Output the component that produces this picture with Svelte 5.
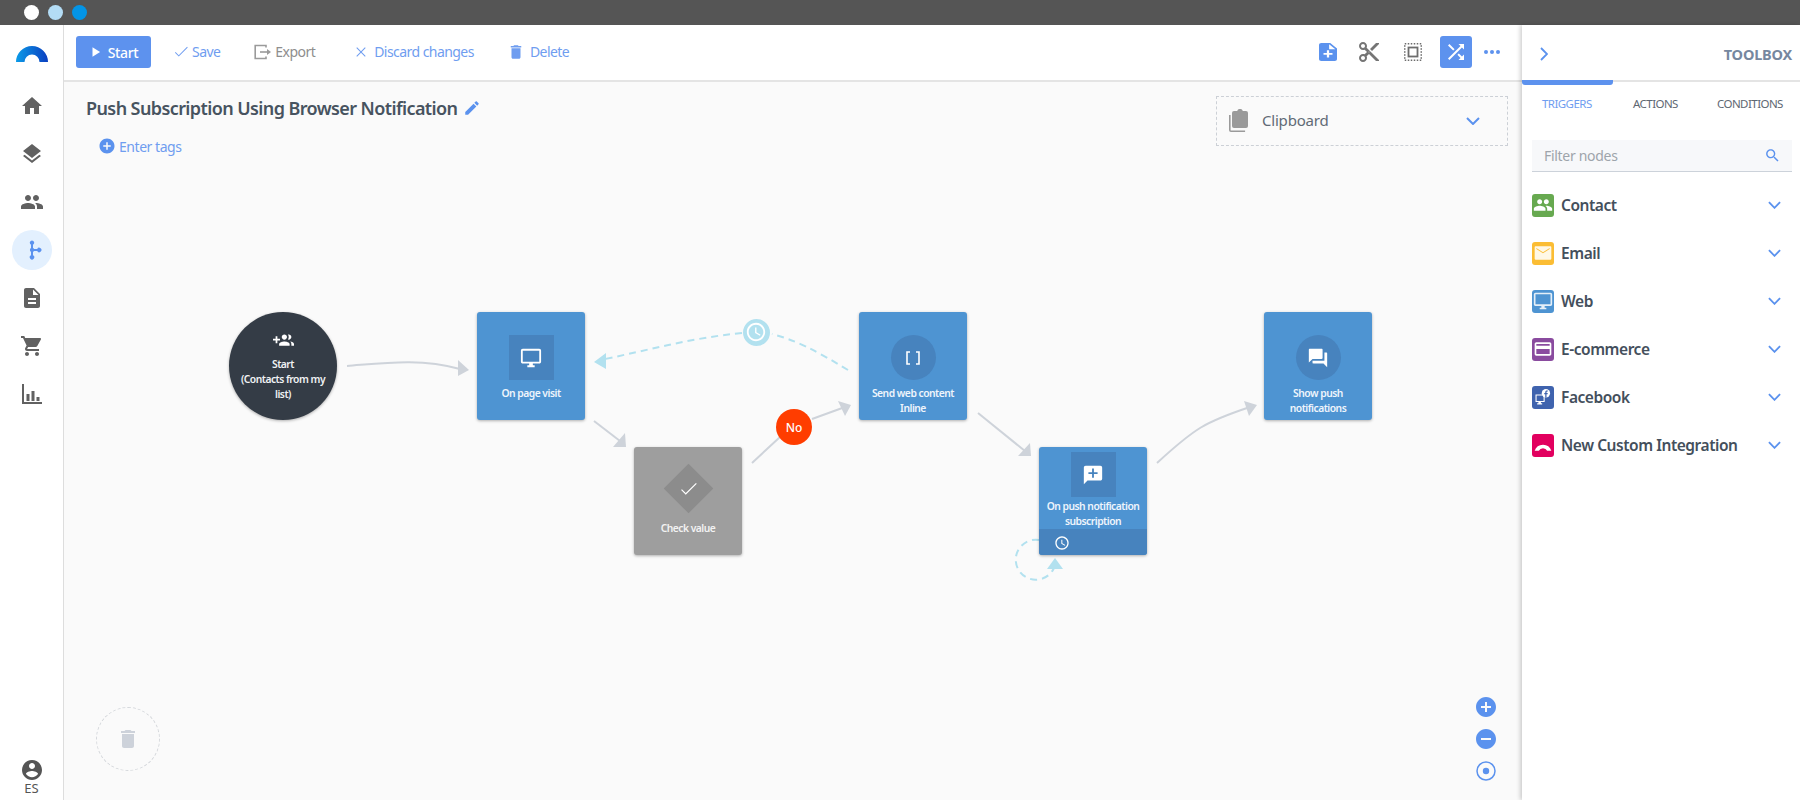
<script>
  const paths = {
    home: 'M10 20v-6h4v6h5v-8h3L12 3 2 12h3v8z',
    layers: 'M11.99 18.54l-7.37-5.73L3 14.07l9 7 9-7-1.63-1.27-7.38 5.74zM12 16l7.36-5.73L21 9l-9-7-9 7 1.63 1.27L12 16z',
    people: 'M16 11c1.66 0 2.99-1.34 2.99-3S17.66 5 16 5c-1.66 0-3 1.34-3 3s1.34 3 3 3zm-8 0c1.66 0 2.99-1.34 2.99-3S9.66 5 8 5C6.34 5 5 6.34 5 8s1.34 3 3 3zm0 2c-2.33 0-7 1.17-7 3.5V19h14v-2.5c0-2.33-4.67-3.5-7-3.5zm8 0c-.29 0-.62.02-.97.05 1.16.84 1.97 1.97 1.97 3.45V19h6v-2.5c0-2.33-4.67-3.5-7-3.5z',
    doc: 'M14 2H6c-1.1 0-1.99.9-1.99 2L4 20c0 1.1.89 2 1.99 2H18c1.1 0 2-.9 2-2V8l-6-6zm2 16H8v-2h8v2zm0-4H8v-2h8v2zm-3-5V3.5L18.5 9H13z',
    cart: 'M7 18c-1.1 0-1.99.9-1.99 2S5.9 22 7 22s2-.9 2-2-.9-2-2-2zM1 2v2h2l3.6 7.59-1.35 2.45c-.16.28-.25.61-.25.96 0 1.1.9 2 2 2h12v-2H7.42c-.14 0-.25-.11-.25-.25l.03-.12.9-1.63h7.45c.75 0 1.41-.41 1.75-1.03l3.58-6.49c.08-.14.12-.31.12-.48 0-.55-.45-1-1-1H5.21l-.94-2H1zm16 16c-1.1 0-1.99.9-1.99 2s.89 2 1.99 2 2-.9 2-2-.9-2-2-2z',
    chart: 'M2 2h2v18h18v2H2zM6.5 12h3v7h-3zM11.5 9h3v10h-3zM16.5 15h3v4h-3z',
    flow: 'M12 2.5a2.2 2.2 0 0 1 1 4.16V10.1a2.2 2.2 0 0 1 1 .9h3.2a2.2 2.2 0 1 1 0 2H14a2.2 2.2 0 0 1-1 .9v3.44a2.2 2.2 0 1 1-2 0V13.9a2.2 2.2 0 0 1 0-3.8V6.66A2.2 2.2 0 0 1 12 2.5z',
    user: 'M12 2C6.48 2 2 6.48 2 12s4.48 10 10 10 10-4.48 10-10S17.52 2 12 2zm0 3c1.66 0 3 1.34 3 3s-1.34 3-3 3-3-1.34-3-3 1.34-3 3-3zm0 14.2c-2.5 0-4.71-1.28-6-3.22.03-1.99 4-3.08 6-3.08 1.99 0 5.97 1.09 6 3.08-1.29 1.94-3.5 3.22-6 3.22z',
    play: 'M6 4v16l13-8z',
    check: 'M9 16.17L4.83 12l-.9.9L9 18 21 6l-.9-.9z',
    close: 'M19 6.1L17.9 5 12 10.9 6.1 5 5 6.1 10.9 12 5 17.9 6.1 19 12 13.1 17.9 19 19 17.9 13.1 12z',
    trash: 'M6 19c0 1.1.9 2 2 2h8c1.1 0 2-.9 2-2V7H6v12zM19 4h-3.500l-1-1h-5l-1 1H5v2h14V4z',
    pencil: 'M3 17.25V21h3.75L17.81 9.94l-3.75-3.75L3 17.25zM20.71 7.04c.39-.39.39-1.02 0-1.41l-2.34-2.34c-.39-.39-1.02-.39-1.41 0l-1.83 1.83 3.75 3.75 1.83-1.83z',
    plus: 'M12 2C6.48 2 2 6.48 2 12s4.48 10 10 10 10-4.48 10-10S17.52 2 12 2zm5 11h-4v4h-2v-4H7v-2h4V7h2v4h4v2z',
    minus: 'M12 2C6.48 2 2 6.48 2 12s4.48 10 10 10 10-4.48 10-10S17.52 2 12 2zm5 11H7v-2h10v2z',
    cut: 'M9.64 7.64c.23-.5.36-1.05.36-1.64 0-2.21-1.79-4-4-4S2 3.79 2 6s1.79 4 4 4c.59 0 1.14-.13 1.64-.36L10 12l-2.36 2.36C7.14 14.13 6.59 14 6 14c-2.21 0-4 1.79-4 4s1.79 4 4 4 4-1.79 4-4c0-.59-.13-1.14-.36-1.64L12 14l7 7h3v-1L9.64 7.64zM6 8c-1.1 0-2-.89-2-2s.9-2 2-2 2 .89 2 2-.9 2-2 2zm0 12c-1.1 0-2-.89-2-2s.9-2 2-2 2 .89 2 2-.9 2-2 2zm6-7.5c-.28 0-.5-.22-.5-.5s.22-.5.5-.5.5.22.5.5-.22.5-.5.5zM19 3l-6 6 2 2 7-7V3z',
    shuffle: 'M10.59 9.17L5.41 4 4 5.41l5.17 5.17 1.42-1.41zM14.5 4l2.04 2.04L4 18.59 5.41 20 17.96 7.46 20 9.5V4h-5.5zm.33 9.41l-1.41 1.41 3.13 3.13L14.5 20H20v-5.5l-2.04 2.04-3.13-3.13z',
    search: 'M15.5 14h-.79l-.28-.27C15.41 12.59 16 11.11 16 9.5 16 5.91 13.09 3 9.5 3S3 5.91 3 9.5 5.91 16 9.5 16c1.61 0 3.09-.59 4.23-1.57l.27.28v.79l5 4.99L20.49 19l-4.99-5zm-6 0C7.01 14 5 11.99 5 9.5S7.01 5 9.5 5 14 7.01 14 9.5 11.99 14 9.5 14z',
    desktop: 'M21 2H3c-1.1 0-2 .9-2 2v12c0 1.1.9 2 2 2h7v2H8v2h8v-2h-2v-2h7c1.1 0 2-.9 2-2V4c0-1.1-.9-2-2-2zm0 14H3V4h18v12z',
    groupadd: 'M8 10H5V7H3v3H0v2h3v3h2v-3h3v-2zm10 1c1.66 0 2.99-1.34 2.99-3S19.66 5 18 5c-.32 0-.63.05-.91.14.57.81.9 1.79.9 2.86s-.34 2.04-.9 2.86c.28.09.59.14.91.14zm-5 0c1.66 0 2.99-1.34 2.99-3S14.66 5 13 5s-3 1.34-3 3 1.34 3 3 3zm6.62 2.16c.83.73 1.38 1.66 1.38 2.84v2h3v-2c0-1.54-2.37-2.49-4.38-2.84zM13 13c-2 0-6 1-6 3v2h12v-2c0-2-4-3-6-3z',
    forum: 'M21 6h-2v9H6v2c0 .55.45 1 1 1h11l4 4V7c0-.55-.45-1-1-1zm-4 6V3c0-.55-.45-1-1-1H3c-.55 0-1 .45-1 1v14l4-4h10c.55 0 1-.45 1-1z',
    comment: 'M22 4c0-1.1-.9-2-2-2H4c-1.1 0-1.99.9-1.99 2L2 22l4-4h14c1.1 0 2-.9 2-2V4zm-5 7h-4v4h-2v-4H7V9h4V5h2v4h4v2z',
    clock: 'M11.99 2C6.47 2 2 6.48 2 12s4.47 10 9.99 10C17.52 22 22 17.52 22 12S17.52 2 11.99 2zM12 20c-4.42 0-8-3.58-8-8s3.58-8 8-8 8 3.58 8 8-3.58 8-8 8zm.5-13H11v6l5.25 3.15.75-1.23-4.5-2.67z',
    mail: 'M3 4h18a1 1 0 0 1 1 1v14a1 1 0 0 1-1 1H3a1 1 0 0 1-1-1V5a1 1 0 0 1 1-1zm9 8.2L20 7.2V6L12 11 4 6v1.2z',
    card: 'M20 4H4c-1.11 0-2 .89-2 2v12c0 1.11.89 2 2 2h16c1.11 0 2-.89 2-2V6c0-1.11-.89-2-2-2zm0 14H4v-6h16v6zm0-10H4V6h16v2z',
    fileplus: 'M14 2H6a2 2 0 0 0-2 2v16a2 2 0 0 0 2 2h12a2 2 0 0 0 2-2V8zm-1 1.5L18.5 9H13zM16 15h-3v3h-2v-3H8v-2h3v-3h2v3h3z',
    clip: 'M18 2h-3.2a2.9 2.9 0 0 0-5.6 0H6a2 2 0 0 0-2 2v13a2 2 0 0 0 2 2h12a2 2 0 0 0 2-2V4a2 2 0 0 0-2-2zM1 6h1.6v15a.5.5 0 0 0 .5.5h14V23H3a2 2 0 0 1-2-2z'
  };

  const side = [
    { icon: 'home', on: false }, { icon: 'layers', on: false }, { icon: 'people', on: false },
    { icon: 'flow', on: true }, { icon: 'doc', on: false }, { icon: 'cart', on: false }, { icon: 'chart', on: false }
  ];
  const nodes = [
    { x: 477, y: 312, kind: 'blue', shape: 'sq', icon: 'desktop', lines: ['On page visit'] },
    { x: 634, y: 447, kind: 'grey', shape: 'dia', icon: 'check', lines: ['Check value'] },
    { x: 859, y: 312, kind: 'blue', shape: 'round', icon: 'brackets', lines: ['Send web content', 'Inline'] },
    { x: 1264, y: 312, kind: 'blue', shape: 'round', icon: 'forum', lines: ['Show push', 'notifications'] }
  ];
  const cats = [
    { label: 'Contact', bg: '#67a950', icon: 'people' },
    { label: 'Email', bg: '#fbbd34', icon: 'mail' },
    { label: 'Web', bg: '#4e94d2', icon: 'desktop' },
    { label: 'E-commerce', bg: '#8a4b9f', icon: 'card' },
    { label: 'Facebook', bg: '#3f63ae', icon: 'fb' },
    { label: 'New Custom Integration', bg: '#e2005f', icon: 'arc' }
  ];
  const ox = 64, oy = 82;
</script>

<div class="top">
  <span class="dot white"></span><span class="dot pale"></span><span class="dot sky"></span>
</div>

<div class="body">
  <nav class="sidebar">
    <svg class="logo" viewBox="0 0 32 16" width="32" height="16">
      <defs>
        <linearGradient id="lg" x1="0" x2="1" y1="0" y2="0">
          <stop offset="0" stop-color="#0b9be8" /><stop offset="1" stop-color="#0b3fc0" />
        </linearGradient>
      </defs>
      <path d="M0 16A16 16 0 0 1 32 16H23.5A7.5 7.5 0 0 0 8.5 16Z" fill="url(#lg)" />
    </svg>
    <div class="sidelist">
      {#each side as s}
        <div class="sideitem" class:on={s.on}>
          <svg viewBox="0 0 24 24" width="24" height="24"><path d={paths[s.icon]} /></svg>
        </div>
      {/each}
    </div>
    <div class="lang">
      <svg viewBox="0 0 24 24" width="24" height="24"><path d={paths.user} /></svg>
      <span>ES</span>
    </div>
  </nav>

  <main class="main">
    <header class="toolbar">
      <button class="start">
        <svg viewBox="0 0 24 24" width="14" height="14"><path d={paths.play} /></svg>
        <span>Start</span>
      </button>
      <div class="btn blue save"><svg viewBox="0 0 24 24" width="18" height="18"><path d={paths.check} /></svg><span>Save</span></div>
      <div class="btn grey export">
        <svg viewBox="0 0 18 16" width="18" height="16" class="outline">
          <path d="M12 3.5V1.500H1.200V14.500H12V12.500" /><path d="M6 8H13" /><path class="solid" d="M13 5L17 8L13 11Z" />
        </svg>
        <span>Export</span>
      </div>
      <div class="btn blue discard"><svg viewBox="0 0 24 24" width="16" height="16"><path d={paths.close} /></svg><span>Discard changes</span></div>
      <div class="btn blue delete"><svg viewBox="0 0 24 24" width="18" height="18"><path d={paths.trash} /></svg><span>Delete</span></div>
      <div class="tools">
        <svg class="tfile" viewBox="4 2 16 20" width="18" height="18" preserveAspectRatio="none"><path d={paths.fileplus} /></svg>
        <svg class="tcut" viewBox="0 0 24 24" width="24" height="24"><path d={paths.cut} /></svg>
        <svg class="tsel" viewBox="0 0 18 18" width="18" height="18">
          <rect x=".75" y=".75" width="16.500" height="16.500" class="dash" />
          <rect x="4.500" y="4.500" width="9" height="9" class="inner" />
        </svg>
        <div class="tshuffle"><svg viewBox="0 0 24 24" width="24" height="24"><path d={paths.shuffle} /></svg></div>
        <div class="more"><i></i><i></i><i></i></div>
      </div>
    </header>

    <section class="canvas">
      <div class="titlerow">
        <h1>Push Subscription Using Browser Notification</h1>
        <svg viewBox="0 0 24 24" width="18" height="18"><path d={paths.pencil} /></svg>
      </div>
      <div class="tags">
        <svg viewBox="0 0 24 24" width="18" height="18"><path d={paths.plus} /></svg>
        <span>Enter tags</span>
      </div>

      <div class="clipboard">
        <svg viewBox="0 0 24 24" width="24" height="24"><path d={paths.clip} /></svg>
        <span>Clipboard</span>
        <svg class="chev" viewBox="0 0 14 8" width="14" height="8"><path d="M1 1L7 7L13 1" /></svg>
      </div>

      <svg class="edges" width="1457" height="718" viewBox="{ox} {oy} 1457 718">
        <g class="edge">
          <path d="M347 366C385 363 420 358 460 369" />
          <path d="M594 421L620 441" />
          <path d="M752 463L780 437M812 419L845 407" />
          <path d="M978 413L1025 451" />
          <path d="M1157 463C1195 428 1205 422 1250 407" />
        </g>
        <g class="tip">
          <path d="M469 370L458 360L458 376Z" />
          <path d="M626 447L613 447L625 433Z" />
          <path d="M851 405L838 401L845 416Z" />
          <path d="M1031 456L1018 456L1030 443Z" />
          <path d="M1257 405L1244 401L1249 416Z" />
        </g>
        <g class="dashline">
          <path d="M848 370C815 350 795 340 772 334" />
          <path d="M742 333C690 338 650 350 600 360" />
          <path d="M1039 540A20 20 0 1 0 1054 568" />
        </g>
        <g class="tipdash">
          <path d="M594 362L606 353L606 369Z" />
          <path d="M1055 558L1047 569L1063 569Z" />
        </g>
      </svg>

      <div class="startnode" style="left:{229 - ox}px;top:{312 - oy}px">
        <svg viewBox="0 0 24 24" width="21" height="21"><path d={paths.groupadd} /></svg>
        <p>Start</p>
        <p>(Contacts from my</p>
        <p>list)</p>
      </div>

      {#each nodes as n}
        <div class="node {n.kind}" style="left:{n.x - ox}px;top:{n.y - oy}px">
          <div class="ic {n.shape}">
            {#if n.icon === 'brackets'}
              <svg class="br" viewBox="0 0 16 16" width="16" height="16"><path d="M5 2H2V14H5M11 2H14V14H11" /></svg>
            {:else}
              <svg viewBox="0 0 24 24" width="22" height="22"><path d={paths[n.icon]} /></svg>
            {/if}
          </div>
          {#each n.lines as l}<p>{l}</p>{/each}
        </div>
      {/each}

      <div class="node blue push" style="left:{1039 - ox}px;top:{447 - oy}px">
        <div class="ic sq"><svg viewBox="0 0 24 24" width="22" height="22"><path d={paths.comment} /></svg></div>
        <p>On push notification</p>
        <p>subscription</p>
        <div class="foot"><svg viewBox="0 0 24 24" width="16" height="16"><path d={paths.clock} /></svg></div>
      </div>

      <div class="clockbadge" style="left:{742.5 - ox}px;top:{318.5 - oy}px">
        <svg viewBox="0 0 24 24" width="22" height="22"><path d={paths.clock} /></svg>
      </div>
      <div class="nobadge" style="left:{776 - ox}px;top:{409 - oy}px">No</div>

      <div class="bin"><svg viewBox="0 0 24 24" width="24" height="24"><path d={paths.trash} /></svg></div>

      <div class="zoomctl">
        <svg viewBox="2 2 20 20" width="20" height="20"><path d={paths.plus} /></svg>
        <svg viewBox="2 2 20 20" width="20" height="20"><path d={paths.minus} /></svg>
        <svg viewBox="0 0 20 20" width="20" height="20" class="center"><circle cx="10" cy="10" r="9" /><circle cx="10" cy="10" r="3.2" class="c" /></svg>
      </div>
    </section>
  </main>

  <aside class="panel">
    <div class="phead">
      <svg viewBox="0 0 8 14" width="8" height="14"><path d="M1 1L7 7L1 13" /></svg>
      <strong>TOOLBOX</strong>
    </div>
    <div class="tabs">
      <span class="tab active">TRIGGERS</span>
      <span class="tab">ACTIONS</span>
      <span class="tab">CONDITIONS</span>
    </div>
    <div class="filter">
      <span>Filter nodes</span>
      <svg viewBox="0 0 24 24" width="17" height="17"><path d={paths.search} /></svg>
    </div>
    <ul class="cats">
      {#each cats as c}
        <li>
          <span class="tile" style="background:{c.bg}">
            {#if c.icon === 'fb'}
              <svg viewBox="0 0 24 24" width="22" height="22">
                <path d="M3 9h11v9H9.500v1.500H11V21H5v-1.500h1.500V18H3zM4.300 10.300v6.400h8.400v-6.400z" fill="#fff" />
                <circle cx="15.500" cy="7.500" r="5" fill="#fff" />
                <path d="M16.200 12.500V8.600h1.300l.2-1.500h-1.500v-.9c0-.4.2-.7.7-.7h.9V4.100h-1.200c-1.200 0-1.900.8-1.900 1.900v1.100h-1.200v1.500h1.200v3.900z" fill="#3f63ae" />
              </svg>
            {:else if c.icon === 'arc'}
              <svg viewBox="0 0 24 24" width="22" height="22"><path d="M2 19A10.500 10.500 0 0 1 22 19H17A5.500 5.500 0 0 0 7 19Z" fill="#fff" /></svg>
            {:else}
              <svg viewBox="0 0 24 24" width="22" height="22"><path d={paths[c.icon]} fill={c.icon === 'mail' ? '#fff8e6' : '#fff'} opacity={c.icon === 'desktop' ? .85 : 1} /></svg>
            {/if}
          </span>
          <span class="catlabel">{c.label}</span>
          <svg class="chev" viewBox="0 0 14 8" width="13" height="8"><path d="M1 1L7 7L13 1" /></svg>
        </li>
      {/each}
    </ul>
  </aside>
</div>

<style>
  :global(body) { margin: 0; overflow: hidden; background: #fff; }
  .top, .body { font-family: "Noto Sans", "Open Sans", sans-serif; }

  .top { height: 25px; background: #555; display: flex; align-items: center; gap: 9px; padding-left: 24px; }
  .dot { width: 15px; height: 15px; border-radius: 50%; }
  .white { background: #fff; }
  .pale { background: #b3dcf5; }
  .sky { background: #0394e6; }

  .body { display: flex; height: 775px; }

  .sidebar { width: 63px; border-right: 1px solid #ddd; background: #fff; display: flex; flex-direction: column; align-items: center; flex: none; }
  .logo { margin-top: 21px; margin-left: 1px; }
  .sidelist { display: flex; flex-direction: column; margin-top: 24px; gap: 8px; align-items: center; }
  .sideitem { width: 40px; height: 40px; border-radius: 50%; display: flex; align-items: center; justify-content: center; fill: #616161; }
  .sideitem.on { background: #e3f0fe; fill: #5b92ef; }
  .lang { margin-top: auto; display: flex; flex-direction: column; align-items: center; fill: #555; color: #555; font-size: 13px; line-height: 15px; padding-bottom: 4px; }
  .lang svg { margin-bottom: -1px; }

  .main { flex: 1; min-width: 0; display: flex; flex-direction: column; }
  .toolbar { height: 57px; flex: none; box-sizing: border-box; border-bottom: 2px solid #e4e4e4; display: flex; align-items: center; padding: 0 22px 1px 12px; background: #fff; }
  .start { width: 75px; height: 32px; border: 0; border-radius: 3px; background: #5d92ee; color: #fff; display: flex; align-items: center; justify-content: center; gap: 5px; font: 500 14px "Noto Sans", sans-serif; letter-spacing: -.4px; padding: 0; fill: #fff; }
  .btn { display: flex; align-items: center; font-size: 14px; letter-spacing: -.55px; margin-top: -1px; }
  .btn.blue { color: #6f9df0; fill: #6f9df0; }
  .btn.grey { color: #8e8e8e; fill: #8e8e8e; }
  .save { margin-left: 21px; gap: 2px; }
  .export { margin-left: 34px; gap: 3px; }
  .discard { margin-left: 38px; gap: 5px; }
  .delete { margin-left: 33px; gap: 5px; }
  .outline path { fill: none; stroke: #9a9a9a; stroke-width: 1.6; }
  .outline path.solid { fill: #9a9a9a; stroke: none; }

  .tools { margin-left: auto; display: flex; align-items: center; }
  .tfile { fill: #5b92ee; }
  .tcut { fill: #757575; margin-left: 20px; }
  .tsel { margin-left: 23px; }
  .dash { fill: none; stroke: #6d6d6d; stroke-width: 1.5; stroke-dasharray: 1.5 1.5; }
  .inner { fill: none; stroke: #6d6d6d; stroke-width: 1.8; }
  .tshuffle { width: 32px; height: 32px; background: #5d92ee; border-radius: 3px; margin-left: 18px; display: flex; align-items: center; justify-content: center; fill: #fff; }
  .more { display: flex; gap: 2px; margin-left: 12px; }
  .more i { width: 4px; height: 4px; border-radius: 50%; background: #5d92ee; }

  .canvas { flex: 1; position: relative; background: #fafafa; padding: 14px 22px; }
  .titlerow { display: flex; align-items: center; gap: 6px; fill: #5b92ee; height: 24px; }
  h1 { margin: 0; font-size: 18px; font-weight: 600; color: #47535f; letter-spacing: -.6px; white-space: nowrap; }
  .tags { display: flex; align-items: center; gap: 3px; margin: 16px 0 0 12px; color: #6f9df0; fill: #5b92ee; font-size: 14px; letter-spacing: -.45px; height: 20px; }

  .clipboard { position: absolute; left: 1152px; top: 14px; width: 292px; height: 50px; box-sizing: border-box; border: 1px dashed #ccd0d6; display: flex; align-items: center; padding: 0 27px 0 11px; color: #616a75; fill: #9a9a9a; font-size: 15px; }
  .clipboard span { margin-left: 10px; flex: 1; letter-spacing: -.2px; padding-bottom: 3px; }
  .chev { fill: none; stroke: #5b92ee; stroke-width: 2; flex: none; }

  .edges { position: absolute; left: 0; top: 0; pointer-events: none; }
  .edge path { fill: none; stroke: #ced3da; stroke-width: 2; }
  .tip path { fill: #ced3da; }
  .dashline path { fill: none; stroke: #b2e1ef; stroke-width: 2; stroke-dasharray: 7 5; }
  .tipdash path { fill: #b2e1ef; }

  .startnode { position: absolute; width: 108px; height: 108px; border-radius: 50%; background: #343c46; color: #f0f2f4; box-shadow: 0 1px 3px rgba(0,0,0,.3); display: flex; flex-direction: column; align-items: center; box-sizing: border-box; padding-top: 18px; fill: #fff; }
  .startnode svg { margin-bottom: 6px; }
  .startnode p, .node p { margin: 0; font-size: 10.3px; line-height: 15px; font-weight: 600; letter-spacing: -.5px; text-align: center; white-space: nowrap; }

  .node { position: absolute; width: 108px; height: 108px; border-radius: 3px; box-shadow: 0 1px 3px rgba(0,0,0,.3); display: flex; flex-direction: column; align-items: center; box-sizing: border-box; padding-top: 23px; color: #eef5fc; fill: #fff; overflow: hidden; }
  .node.blue { background: #4e94d2; }
  .node.grey { background: #9e9e9e; color: #f2f2f2; }
  .ic { width: 45px; height: 45px; display: flex; align-items: center; justify-content: center; margin-bottom: 6px; flex: none; background: #4783be; }
  .ic.round { border-radius: 50%; }
  .ic.dia { background: #8c8c8c; width: 35px; height: 35px; transform: rotate(45deg); margin: 1px 5px 15px; }
  .ic.dia svg { transform: rotate(-45deg); }
  .br { fill: none; stroke: #fff; stroke-width: 1.6; }
  .node.push { padding-top: 5px; }
  .node.push .ic { margin-bottom: 2px; }
  .foot { flex: none; align-self: stretch; height: 27px; background: #4783be; display: flex; align-items: center; padding-left: 15px; box-sizing: border-box; }

  .clockbadge { position: absolute; width: 27px; height: 27px; border-radius: 50%; background: #b2e1ef; display: flex; align-items: center; justify-content: center; fill: #fff; }
  .nobadge { position: absolute; width: 36px; height: 36px; border-radius: 50%; background: #ff3d00; color: #fff; display: flex; align-items: center; justify-content: center; font-size: 12px; font-weight: 500; }

  .bin { position: absolute; left: 32px; top: 625px; width: 64px; height: 64px; box-sizing: border-box; border: 1px dashed #d4d7db; border-radius: 50%; display: flex; align-items: center; justify-content: center; fill: #cdd2da; }

  .zoomctl { position: absolute; left: 1412px; top: 615px; display: flex; flex-direction: column; gap: 12px; fill: #5b92ee; }
  .center circle { fill: none; stroke: #5b92ee; stroke-width: 1.5; }
  .center circle.c { fill: #5b92ee; stroke: none; }

  .panel { width: 278px; flex: none; background: #fff; box-shadow: -2px 0 4px rgba(0,0,0,.18); position: relative; z-index: 1; }
  .phead { height: 57px; box-sizing: border-box; border-bottom: 2px solid #e4e4e4; display: flex; align-items: center; justify-content: space-between; padding: 2px 8px 0 18px; }
  .phead svg { fill: none; stroke: #5b92ee; stroke-width: 1.8; }
  .phead strong { font-size: 14.5px; color: #76879f; letter-spacing: -.2px; font-weight: 700; }
  .tabs { display: flex; height: 56px; box-sizing: border-box; font-size: 11.5px; letter-spacing: -.55px; color: #5e6772; position: relative; }
  .tab { position: absolute; top: 14px; line-height: 16px; }
  .tab:nth-child(1) { left: 20px; color: #6f9df0; }
  .tab:nth-child(2) { left: 111px; }
  .tab:nth-child(3) { left: 195px; }
  .tab.active::before { content: ""; position: absolute; left: -20px; top: -16px; width: 91px; height: 5px; background: #5d92ee; border-radius: 0 0 3px 3px; }
  .filter { margin: 2px 8px 0 10px; height: 32px; box-sizing: border-box; background: #f7f8fa; border-bottom: 1.5px solid #ccd2da; display: flex; align-items: center; justify-content: space-between; padding: 0 11px 0 12px; color: #9ea4ab; font-size: 14px; letter-spacing: -.3px; fill: #5b92ee; }
  .cats { list-style: none; margin: 21px 8px 0 10px; padding: 0; display: flex; flex-direction: column; gap: 24px; }
  .cats li { display: flex; align-items: center; height: 24px; }
  .tile { width: 22px; height: 23px; border-radius: 3px; display: flex; align-items: center; justify-content: center; flex: none; overflow: hidden; }
  .tile svg { width: 20px; height: 20px; }
  .catlabel { margin-left: 7px; flex: 1; font-size: 15.5px; font-weight: 600; color: #444f5c; letter-spacing: -.45px; white-space: nowrap; }
  .cats .chev { margin-right: 11px; }
</style>
